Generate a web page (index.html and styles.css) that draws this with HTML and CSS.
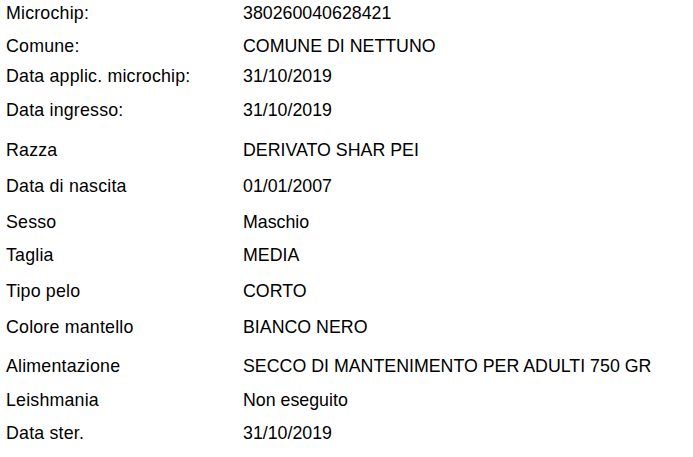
FILE: index.html
```html
<!DOCTYPE html>
<html lang="it">
<head>
    <meta charset="UTF-8">
    <meta name="viewport" content="width=device-width, initial-scale=1.0">
    <title>Scheda cane</title>
    <link rel="stylesheet" href="styles.css">
</head>
<body>
    <div class="scheda">
        <div class="label">Microchip:</div><div class="value">380260040628421</div>
        <div class="label">Comune:</div><div class="value">COMUNE DI NETTUNO</div>
        <div class="label">Data applic. microchip:</div><div class="value">31/10/2019</div>
        <div class="label">Data ingresso:</div><div class="value">31/10/2019</div>
        <div class="label">Razza</div><div class="value">DERIVATO SHAR PEI</div>
        <div class="label">Data di nascita</div><div class="value">01/01/2007</div>
        <div class="label">Sesso</div><div class="value">Maschio</div>
        <div class="label">Taglia</div><div class="value">MEDIA</div>
        <div class="label">Tipo pelo</div><div class="value">CORTO</div>
        <div class="label">Colore mantello</div><div class="value">BIANCO NERO</div>
        <div class="label">Alimentazione</div><div class="value">SECCO DI MANTENIMENTO PER ADULTI 750 GR</div>
        <div class="label">Leishmania</div><div class="value">Non eseguito</div>
        <div class="label">Data ster.</div><div class="value">31/10/2019</div>
    </div>
</body>
</html>
```

FILE: styles.css
```css
body {
    margin: 0;
    padding: 0;
    background-color: #ffffff;
    color: #000000;
    font-family: "Liberation Sans", Arial, sans-serif;
    font-size: 17.8px;
}

.scheda {
    display: grid;
    grid-template-columns: 243px 1fr;
    /* righe di altezza diversa, come nella scheda originale */
    grid-template-rows: 33px 30px 34px 40px 36px 36px 33px 36px 36px 39px 34px 33px 24px;
    padding-top: 3px;
}

.label,
.value {
    line-height: 20px;
    white-space: nowrap;
}

.label {
    padding-left: 6px;
    letter-spacing: 0.2px;
}
```
